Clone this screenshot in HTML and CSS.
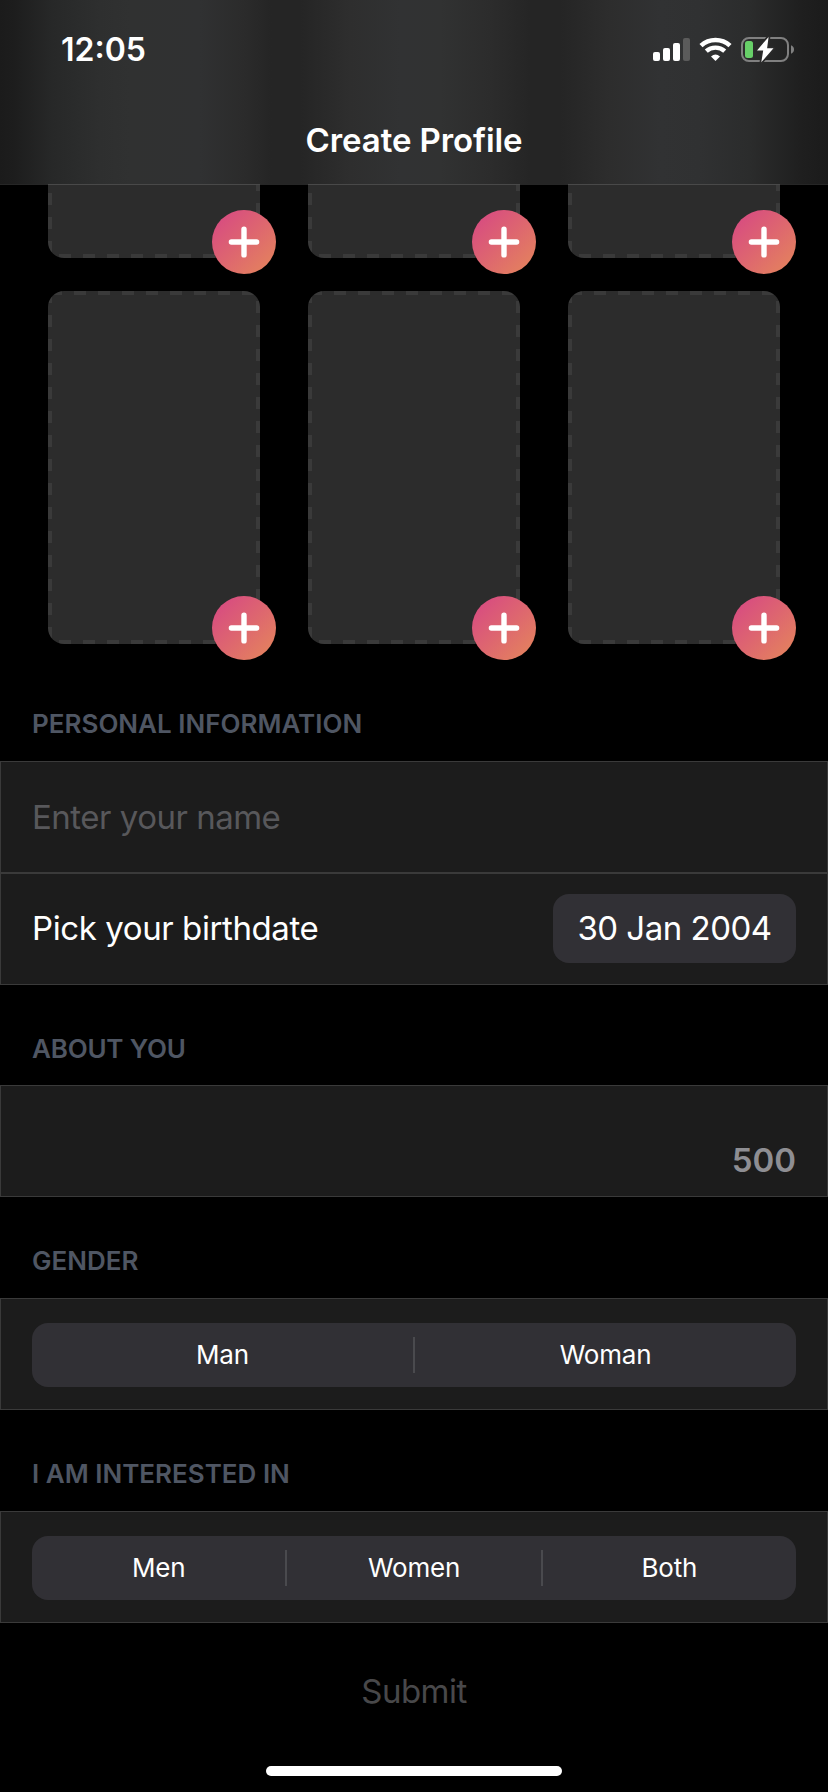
FILE: index.html
```html
<!DOCTYPE html>
<html lang="en">
<head>
<meta charset="utf-8">
<title>Create Profile</title>
<link rel="stylesheet" href="styles.css">
</head>
<body>
<svg class="defs" aria-hidden="true">
  <symbol id="plus" viewBox="0 0 64 64">
    <path d="M32 19.3v25.6M19.4 32h25.2" stroke="#fff" stroke-width="5.4" stroke-linecap="round"/>
  </symbol>
</svg>
<div class="screen">
  <header class="header">
    <div class="status">
      <span class="time">12:05</span>
      <svg class="status-icons" viewBox="0 0 144 28" fill="none">
        <g fill="#fff">
          <rect x="3" y="16" width="7" height="9" rx="2"/>
          <rect x="13" y="12" width="7" height="13" rx="2"/>
          <rect x="23" y="7" width="7" height="18" rx="2"/>
          <rect x="33" y="2" width="7" height="23" rx="2" fill="#5b5b5b"/>
        </g>
        <g stroke="#fff">
          <path d="M51 9.6A21.4 21.4 0 0 1 80 9.6" stroke-width="4.6"/>
          <path d="M56.3 15.2A13.6 13.6 0 0 1 74.7 15.2" stroke-width="4.4"/>
        </g>
        <path d="M61 20.4Q65.500 16.600 70 20.400L65.500 25Z" fill="#fff"/>
        <rect x="92" y="2" width="46" height="23" rx="7" stroke="#808080" stroke-width="2"/>
        <path d="M141 9.300q3 1.200 3 4.200t-3 4.200z" fill="#808080"/>
        <rect x="95" y="5" width="8" height="17" rx="2.500" fill="#67cf68"/>
        <path d="M118.600 1L107 14.400h6.200L111.300 26.200 123.500 12.300h-6.400z" fill="#fff" stroke="#2b2b2b" stroke-width="3.500" paint-order="stroke" stroke-linejoin="round"/>
      </svg>
    </div>
    <h1 class="title">Create Profile</h1>
  </header>

  <main>
    <div class="gallery">
      <div class="slot"><div class="frame"></div><button class="add" aria-label="Add photo"><svg viewBox="0 0 64 64"><use href="#plus"/></svg></button></div>
      <div class="slot"><div class="frame"></div><button class="add" aria-label="Add photo"><svg viewBox="0 0 64 64"><use href="#plus"/></svg></button></div>
      <div class="slot"><div class="frame"></div><button class="add" aria-label="Add photo"><svg viewBox="0 0 64 64"><use href="#plus"/></svg></button></div>
      <div class="slot"><div class="frame"></div><button class="add" aria-label="Add photo"><svg viewBox="0 0 64 64"><use href="#plus"/></svg></button></div>
      <div class="slot"><div class="frame"></div><button class="add" aria-label="Add photo"><svg viewBox="0 0 64 64"><use href="#plus"/></svg></button></div>
      <div class="slot"><div class="frame"></div><button class="add" aria-label="Add photo"><svg viewBox="0 0 64 64"><use href="#plus"/></svg></button></div>
    </div>

    <h2 class="label label-personal">PERSONAL INFORMATION</h2>
    <div class="row"><span class="placeholder">Enter your name</span></div>
    <div class="row row-date">
      <span class="prompt">Pick your birthdate</span>
      <span class="date">30 Jan 2004</span>
    </div>

    <h2 class="label label-about">ABOUT YOU</h2>
    <div class="row row-count"><span class="count">500</span></div>

    <h2 class="label">GENDER</h2>
    <div class="row row-choice">
      <div class="segments">
        <span class="segment">Man</span>
        <span class="segment">Woman</span>
      </div>
    </div>

    <h2 class="label">I AM INTERESTED IN</h2>
    <div class="row row-choice">
      <div class="segments">
        <span class="segment">Men</span>
        <span class="segment">Women</span>
        <span class="segment">Both</span>
      </div>
    </div>

    <div class="submit">Submit</div>
  </main>
  <div class="home"></div>
</div>
</body>
</html>
```
FILE: styles.css
```css
* { box-sizing: border-box; }

body {
  margin: 0;
  background: #000;
  color: #fff;
  font-family: Inter, "Liberation Sans", sans-serif;
}

.defs { position: absolute; width: 0; height: 0; }

.screen {
  width: 828px;
  height: 1792px;
  overflow: hidden;
}

/* Blurred navigation bar with the photo columns glowing through */
.header {
  height: 185px;
  background:
    linear-gradient(90deg, #262626 48px, #494949 48px 260px, #262626 260px 308px, #494949 308px 520px, #262626 520px 568px, #494949 568px 780px, #262626 780px) 0 184px / 100% 1px no-repeat,
    linear-gradient(90deg, #1b1b1b 0, #1d1d1d 14px, #272828 52px, #2e2f2f 100px, #303131 130px, #303132 200px, #2b2b2b 244px, #252525 272px, #252525 300px, #2e2e2e 350px, #313233 400px, #313232 440px, #2c2c2c 490px, #252525 530px, #252525 560px, #2d2d2d 610px, #313233 660px, #303132 700px, #2b2c2c 750px, #1f1f1f 800px, #1b1b1b 828px);
}

.status {
  display: flex;
  align-items: center;
  justify-content: space-between;
  height: 100px;
  padding: 0 34px 0 61px;
}

.time { font-size: 32px; font-weight: 600; line-height: 40px; }

.status-icons { width: 144px; height: 28px; }

.title {
  margin: 19px 0 0;
  text-align: center;
  font-size: 33px;
  font-weight: 600;
  line-height: 42px;
  letter-spacing: -0.1px;
}

/* Photo grid, scrolled so the upper rows run under the header */
.gallery {
  display: grid;
  grid-template-columns: repeat(3, 212px);
  grid-auto-rows: 353px;
  gap: 33px 48px;
  align-content: end;
  height: 475px;
  padding: 0 48px 16px;
  overflow: hidden;
}

.slot { position: relative; }

.frame {
  height: 100%;
  border-radius: 16px;
  background:
    linear-gradient(90deg, #3a3a3a 12px, transparent 0) 2px 0 / 24px 4px repeat-x,
    linear-gradient(90deg, #3a3a3a 12px, transparent 0) 11px 100% / 24px 4px repeat-x,
    linear-gradient(#3a3a3a 12px, transparent 0) 0 0 / 4px 24px repeat-y,
    linear-gradient(#3a3a3a 12px, transparent 0) 100% 10px / 4px 24px repeat-y,
    #2c2c2c;
}

.add {
  position: absolute;
  right: -16px;
  bottom: -16px;
  width: 64px;
  height: 64px;
  padding: 0;
  border: 0;
  border-radius: 50%;
  background: linear-gradient(135deg, #d64585 0%, #e5875a 100%);
}

.add svg { display: block; width: 64px; height: 64px; }

.label {
  height: 101px;
  margin: 0;
  padding: 48px 32px 0;
  color: #4f5663;
  font-size: 26px;
  font-weight: 600;
  line-height: 32px;
}

.label-about { height: 100px; letter-spacing: -0.2px; }

.row {
  display: flex;
  align-items: center;
  justify-content: space-between;
  height: 112px;
  padding: 0 31px;
  border: 1px solid #3a3a3a;
  background: #1c1c1c;
  font-size: 33px;
  line-height: 40px;
}

.placeholder { color: #58585b; letter-spacing: -0.5px; }

.row-date { padding-bottom: 1px; }
.prompt { padding-bottom: 2px; letter-spacing: -0.41px; }

.date {
  width: 243px;
  height: 69px;
  border-radius: 16px;
  background: #313035;
  text-align: center;
  line-height: 68px;
  letter-spacing: -0.5px;
}

.row-count { align-items: flex-end; justify-content: flex-end; padding-bottom: 16px; }
.count { color: #8e8e93; font-weight: 600; }

.row-choice { align-items: flex-start; padding-top: 24px; }

.segments {
  display: flex;
  align-items: center;
  width: 100%;
  height: 64px;
  border-radius: 16px;
  background: #313035;
}

.segment {
  flex: 1 1 0;
  text-align: center;
  font-size: 26px;
  line-height: 36px;
  letter-spacing: -0.2px;
}

.segment:not(:last-child) {
  padding-right: 2px;
  background: linear-gradient(#4a4a4e, #4a4a4e) 100% 0 / 2px 100% no-repeat;
}

.submit {
  margin-top: 48px;
  color: #48484a;
  text-align: center;
  font-size: 33px;
  line-height: 40px;
  letter-spacing: -0.5px;
}

.home {
  width: 296px;
  height: 10px;
  margin: 55px auto 0;
  border-radius: 5px;
  background: #fff;
}
```
